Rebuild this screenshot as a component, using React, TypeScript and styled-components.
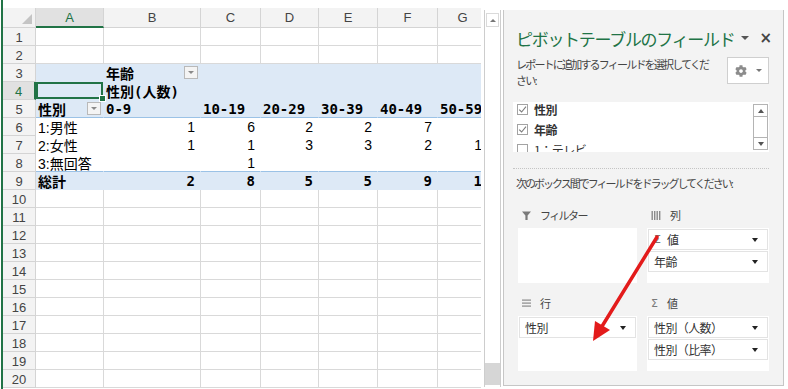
import React from 'react';
import styled, { createGlobalStyle, css } from 'styled-components';
import { FaCog } from 'react-icons/fa';

const GlobalStyle = createGlobalStyle`
  html, body {
    margin: 0;
    padding: 0;
    background: #fff;
  }
  body {
    width: 788px;
    height: 389px;
    overflow: hidden;
    font-family: "Noto Sans CJK JP", sans-serif;
  }
`;

type Zone = 'grid' | 'head' | 'body' | 'total';

interface CellSpec {
  text?: string;
  right?: boolean;
  strong?: boolean;
  filter?: boolean;
  selected?: boolean;
}

interface RowSpec {
  zone: Zone;
  blueBelow?: boolean;
  cells: CellSpec[];
}

const COLS = ['A', 'B', 'C', 'D', 'E', 'F', 'G'];

const num = (v: number, strong = false): CellSpec => ({ text: String(v), right: true, strong });
const head = (text: string, filter = false): CellSpec => ({ text, strong: true, filter });

const pivotRows: Record<number, RowSpec> = {
  3: { zone: 'head', cells: [{}, head('年齢', true)] },
  4: { zone: 'head', cells: [{ selected: true }, head('性別(人数)')] },
  5: {
    zone: 'head',
    blueBelow: true,
    cells: [head('性別', true), head('0-9'), head('10-19'), head('20-29'), head('30-39'), head('40-49'), head('50-59')],
  },
  6: { zone: 'body', cells: [{ text: '1:男性' }, num(1), num(6), num(2), num(2), num(7)] },
  7: { zone: 'body', cells: [{ text: '2:女性' }, num(1), num(1), num(3), num(3), num(2), num(1)] },
  8: { zone: 'body', blueBelow: true, cells: [{ text: '3:無回答' }, {}, num(1)] },
  9: {
    zone: 'total',
    cells: [head('総計'), num(2, true), num(8, true), num(5, true), num(5, true), num(9, true), num(1, true)],
  },
};

const Window = styled.div`
  position: relative;
  display: flex;
  align-items: flex-start;
  width: 788px;
  height: 389px;
  background: #fff;
  overflow: hidden;
`;

/* ---------- spreadsheet ---------- */

const SheetArea = styled.div`
  display: flex;
  height: 389px;
  margin-left: 1px;
  padding-top: 8px;
  box-sizing: border-box;
  border-left: 2px solid #217346;
`;

const Grid = styled.div`
  display: grid;
  grid-template-columns: 33px 68px 97px 60px 58px 59px 60px 50px;
  grid-template-rows: 20px repeat(20, 18px);
  width: 478px;
  overflow: hidden;
  align-self: flex-start;
`;

const headerBase = css`
  box-sizing: border-box;
  display: flex;
  align-items: center;
  justify-content: center;
  background: #f3f3f3;
  color: #444;
  font-family: "Liberation Sans", Arial, sans-serif;
  font-size: 13px;
  border-right: 1px solid #d4d4d4;
  border-bottom: 1px solid #d4d4d4;
`;

const Corner = styled.div`
  ${headerBase};
  position: relative;
  &::after {
    content: '';
    position: absolute;
    right: 3px;
    bottom: 3px;
    border-left: 10px solid transparent;
    border-bottom: 10px solid #c4c4c4;
  }
`;

const ColHead = styled.div<{ $active?: boolean }>`
  ${headerBase};
  ${p =>
    p.$active &&
    css`
      background: #e1e1e1;
      color: #217346;
      border-bottom: 2px solid #217346;
    `}
`;

const RowHead = styled.div<{ $active?: boolean }>`
  ${headerBase};
  padding-top: 1px;
  ${p =>
    p.$active &&
    css`
      background: #e1e1e1;
      color: #217346;
      border-right: 2px solid #217346;
    `}
`;

const Cell = styled.div<{ $zone: Zone; $blueBelow?: boolean; $right?: boolean; $strong?: boolean; $selected?: boolean }>`
  position: relative;
  box-sizing: border-box;
  display: flex;
  align-items: center;
  justify-content: ${p => (p.$right ? 'flex-end' : 'flex-start')};
  padding: 0 5px 0 2px;
  white-space: nowrap;
  color: #000;
  font-size: 14px;
  font-weight: ${p => (p.$strong ? 700 : 400)};
  font-family: ${p =>
    p.$strong
      ? '"DejaVu Sans Mono", "Noto Sans CJK JP", monospace'
      : '"Liberation Sans", "Noto Sans CJK JP", sans-serif'};
  background: ${p => (p.$zone === 'head' || p.$zone === 'total' ? '#dde9f6' : '#fff')};
  border-right: 1px solid ${p => (p.$zone === 'grid' ? '#d9d9d9' : 'transparent')};
  border-bottom: 1px solid
    ${p => (p.$blueBelow ? '#9bc2e6' : p.$zone === 'grid' ? '#d9d9d9' : 'transparent')};
  ${p =>
    p.$selected &&
    css`
      box-shadow: inset 0 0 0 2px #217346;
      &::after {
        content: '';
        position: absolute;
        right: -3px;
        bottom: -3px;
        width: 5px;
        height: 5px;
        background: #217346;
        border: 1px solid #fff;
        z-index: 2;
      }
    `}
`;

const FilterButton = styled.span`
  display: flex;
  align-items: center;
  justify-content: center;
  width: 14px;
  height: 13px;
  margin-left: auto;
  margin-right: -3px;
  box-sizing: border-box;
  border: 1px solid #b9b9b9;
  background: #f4f4f4;
  &::before {
    content: '';
    border-left: 3px solid transparent;
    border-right: 3px solid transparent;
    border-top: 3px solid #8a8a8a;
  }
`;

const VScroll = styled.div`
  display: flex;
  flex-direction: column;
  width: 17px;
  height: 377px;
  margin: 10px 2px 0 3px;
  box-sizing: border-box;
  border-left: 1px solid #cdcdcd;
  border-right: 1px solid #cdcdcd;
  background: #fff;
`;

const ScrollArrow = styled.div`
  display: flex;
  align-items: center;
  justify-content: center;
  height: 12px;
  margin: 3px 1px 0;
  border: 1px solid #dadada;
  &::before {
    content: '';
    border-left: 3px solid transparent;
    border-right: 3px solid transparent;
    border-bottom: 3px solid #777;
  }
`;

const ScrollTrack = styled.div`
  flex: 1;
`;

const ScrollThumb = styled.div`
  height: 22px;
  margin: 0 0 2px;
  background: #d6d6d6;
`;

/* ---------- field pane ---------- */

const Pane = styled.aside`
  display: flex;
  flex-direction: column;
  width: 281px;
  height: 376px;
  margin-top: 10px;
  box-sizing: border-box;
  border: 1px solid #c6c6c6;
  border-top: none;
  background: #f3f3f3;
  color: #444;
`;

const TitleRow = styled.div`
  display: flex;
  align-items: center;
  height: 24px;
  margin-top: 16px;
  padding: 0 11px 0 12px;
`;

const Title = styled.h1`
  margin: 0;
  font-size: 17px;
  font-weight: 400;
  letter-spacing: -1.3px;
  color: #217346;
  white-space: nowrap;
`;

const TitleTools = styled.div`
  display: flex;
  align-items: center;
  gap: 10px;
  margin-left: auto;
`;

const Caret = styled.span<{ $color?: string; $size?: number }>`
  display: inline-block;
  border-left: ${p => p.$size ?? 3.5}px solid transparent;
  border-right: ${p => p.$size ?? 3.5}px solid transparent;
  border-top: ${p => (p.$size ?? 3.5) + 0.5}px solid ${p => p.$color ?? '#222'};
`;

const Close = styled.span`
  font-family: "DejaVu Sans", sans-serif;
  font-size: 15px;
  font-weight: 700;
  line-height: 1;
  color: #444;
`;

const SubRow = styled.div`
  display: flex;
  align-items: flex-start;
  margin-top: 6px;
  padding: 0 14px 0 12px;
`;

const Hint = styled.p`
  margin: 0;
  font-size: 11px;
  line-height: 16px;
  letter-spacing: -1.8px;
  color: #444;
  white-space: nowrap;
`;

const GearButton = styled.div`
  display: flex;
  align-items: center;
  justify-content: center;
  gap: 9px;
  width: 42px;
  height: 27px;
  margin: 1px 0 0 auto;
  box-sizing: border-box;
  border: 1px solid #cfcfcf;
  background: #fff;
  color: #8c8c8c;
`;

const FieldList = styled.div`
  display: flex;
  height: 50px;
  margin: 14px 14px 0 9px;
  background: #fff;
  overflow: hidden;
`;

const FieldItems = styled.div`
  flex: 1;
  padding-left: 4px;
`;

const FieldItem = styled.div<{ $checked?: boolean }>`
  display: flex;
  align-items: center;
  gap: 6px;
  height: 15px;
  margin-bottom: 5px;
  font-size: 12px;
  line-height: 15px;
  letter-spacing: -0.5px;
  color: #333;
  font-weight: ${p => (p.$checked ? 700 : 400)};
`;

const CheckBox = styled.span`
  display: flex;
  align-items: center;
  justify-content: center;
  width: 11px;
  height: 11px;
  box-sizing: border-box;
  border: 1px solid #a3a3a3;
  background: #fff;
`;

const ListScroll = styled.div`
  display: flex;
  flex-direction: column;
  width: 15px;
  margin: 3px 1px 2px 0;
`;

const ListScrollPart = styled.div<{ $dir?: 'up' | 'down' }>`
  display: flex;
  align-items: center;
  justify-content: center;
  flex: ${p => (p.$dir ? '0 0 13px' : '1')};
  box-sizing: border-box;
  border: 1px solid #b4b4b4;
  margin-top: -1px;
  background: #fff;
  &::before {
    content: '';
    display: ${p => (p.$dir ? 'block' : 'none')};
    border-left: 3.5px solid transparent;
    border-right: 3.5px solid transparent;
    ${p => (p.$dir === 'up' ? 'border-bottom: 4px solid #555;' : 'border-top: 4px solid #555;')}
  }
`;

const Separator = styled.hr`
  margin: 16px 14px 0 9px;
  border: none;
  border-top: 1px dotted #c4c4c4;
  height: 0;
`;

const DragHint = styled(Hint)`
  margin-top: 6px;
  padding-left: 12px;
  letter-spacing: -2px;
`;

const Areas = styled.div`
  display: grid;
  grid-template-columns: 119px 122px;
  column-gap: 10px;
  row-gap: 12px;
  margin: 16px 0 0 14px;
`;

const AreaLabel = styled.div`
  display: flex;
  align-items: center;
  gap: 9px;
  height: 16px;
  padding-left: 4px;
  margin-bottom: 5px;
  font-size: 11px;
  letter-spacing: -1.6px;
  color: #444;
`;

const Sigma = styled.span`
  font-family: "DejaVu Sans", sans-serif;
  font-size: 11px;
  color: #7a7a7a;
  letter-spacing: 0;
`;

const AreaBox = styled.div`
  height: 55px;
  padding-top: 1px;
  box-sizing: border-box;
  background: #fff;
`;

const AreaItem = styled.div`
  display: flex;
  align-items: center;
  gap: 6px;
  height: 21px;
  margin: 0 1px 1px;
  padding: 0 9px 0 5px;
  box-sizing: border-box;
  border: 1px solid #e3e3e3;
  font-size: 12px;
  letter-spacing: -0.6px;
  color: #333;
  & > :last-child {
    margin-left: auto;
  }
`;

const ArrowLayer = styled.svg`
  position: absolute;
  left: 0;
  top: 0;
  pointer-events: none;
`;

const FunnelIcon = () => (
  <svg width="9" height="9" viewBox="0 0 9 9">
    <path d="M0 0.5H9L5.6 4.5V9H3.4V4.5Z" fill="#7a7a7a" />
  </svg>
);

const ColumnsIcon = () => (
  <svg width="10" height="9" viewBox="0 0 10 9">
    {[0.5, 3, 5.5, 8].map(x => (
      <rect key={x} x={x} y="0" width="1.4" height="9" fill="#8a8a8a" />
    ))}
  </svg>
);

const RowsIcon = () => (
  <svg width="9" height="8" viewBox="0 0 9 8">
    {[0.5, 3.5, 6.5].map(y => (
      <rect key={y} x="0" y={y} width="9" height="1.2" fill="#8a8a8a" />
    ))}
  </svg>
);

const Check = () => (
  <svg width="9" height="9" viewBox="0 0 9 9">
    <path d="M1.2 4.6L3.6 7L8 1.6" fill="none" stroke="#7c7c7c" strokeWidth="1.1" />
  </svg>
);

const Field = ({ label, checked }: { label: string; checked?: boolean }) => (
  <FieldItem $checked={checked}>
    <CheckBox>{checked && <Check />}</CheckBox>
    {label}
  </FieldItem>
);

const Item = ({ children }: { children: React.ReactNode }) => (
  <AreaItem>
    {children}
    <Caret />
  </AreaItem>
);

export default function App() {
  return (
    <>
      <GlobalStyle />
      <Window>
        <SheetArea>
          <Grid>
            <Corner />
            {COLS.map(c => (
              <ColHead key={c} $active={c === 'A'}>
                {c}
              </ColHead>
            ))}
            {Array.from({ length: 20 }, (_, i) => i + 1).map(n => {
              const row = pivotRows[n] ?? { zone: 'grid' as Zone, cells: [] };
              return (
                <React.Fragment key={n}>
                  <RowHead $active={n === 4}>{n}</RowHead>
                  {COLS.map((c, ci) => {
                    const s = row.cells[ci] ?? {};
                    return (
                      <Cell
                        key={c}
                        $zone={row.zone}
                        $blueBelow={row.blueBelow}
                        $right={s.right}
                        $strong={s.strong}
                        $selected={s.selected}
                      >
                        {s.text && <span>{s.text}</span>}
                        {s.filter && <FilterButton />}
                      </Cell>
                    );
                  })}
                </React.Fragment>
              );
            })}
          </Grid>
        </SheetArea>

        <VScroll>
          <ScrollArrow />
          <ScrollTrack />
          <ScrollThumb />
        </VScroll>

        <Pane>
          <TitleRow>
            <Title>ピボットテーブルのフィールド</Title>
            <TitleTools>
              <Caret $color="#555" $size={4} />
              <Close>×</Close>
            </TitleTools>
          </TitleRow>

          <SubRow>
            <Hint>
              レポートに追加するフィールドを選択してくだ
              <br />
              さい:
            </Hint>
            <GearButton>
              <FaCog size={12} />
              <Caret $color="#777" $size={3} />
            </GearButton>
          </SubRow>

          <FieldList>
            <FieldItems>
              <Field label="性別" checked />
              <Field label="年齢" checked />
              <Field label="1：テレビ" />
            </FieldItems>
            <ListScroll>
              <ListScrollPart $dir="up" />
              <ListScrollPart />
              <ListScrollPart $dir="down" />
            </ListScroll>
          </FieldList>

          <Separator />
          <DragHint>次のボックス間でフィールドをドラッグしてください:</DragHint>

          <Areas>
            <div>
              <AreaLabel>
                <FunnelIcon />
                フィルター
              </AreaLabel>
              <AreaBox />
            </div>
            <div>
              <AreaLabel>
                <ColumnsIcon />
                列
              </AreaLabel>
              <AreaBox>
                <Item>
                  <Sigma>Σ</Sigma>値
                </Item>
                <Item>年齢</Item>
              </AreaBox>
            </div>
            <div>
              <AreaLabel>
                <RowsIcon />
                行
              </AreaLabel>
              <AreaBox>
                <Item>性別</Item>
              </AreaBox>
            </div>
            <div>
              <AreaLabel>
                <Sigma>Σ</Sigma>
                値
              </AreaLabel>
              <AreaBox>
                <Item>性別（人数）</Item>
                <Item>性別（比率）</Item>
              </AreaBox>
            </div>
          </Areas>
        </Pane>

        <ArrowLayer width="788" height="389" viewBox="0 0 788 389">
          <line x1="657" y1="237" x2="601" y2="328" stroke="#e31b1b" strokeWidth="3.5" strokeLinecap="round" />
          <polygon points="593,341 610,330 595,321" fill="#e31b1b" />
        </ArrowLayer>
      </Window>
    </>
  );
}
